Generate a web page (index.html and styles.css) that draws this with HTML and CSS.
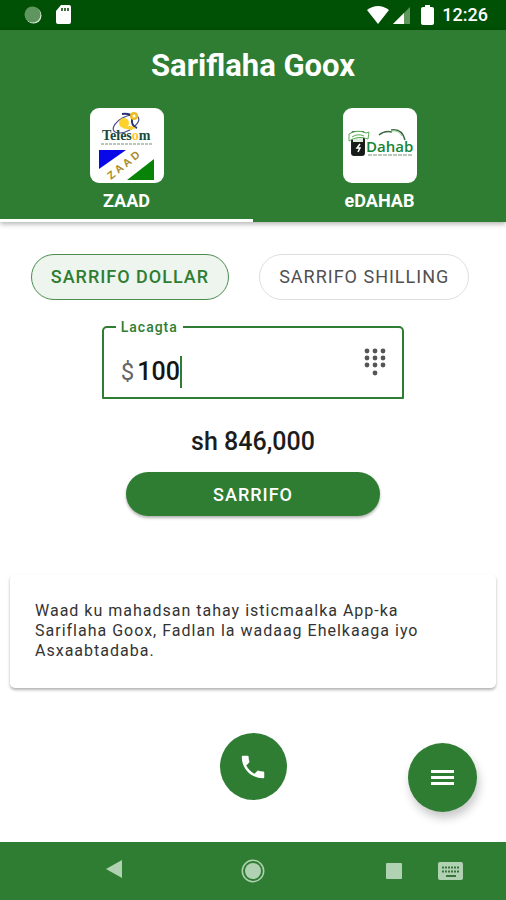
FILE: index.html
```html
<!DOCTYPE html>
<html lang="so">
<head>
<meta charset="utf-8">
<meta name="viewport" content="width=device-width, initial-scale=1">
<title>Sariflaha Goox</title>
<link rel="stylesheet" href="styles.css">
</head>
<body>
<div class="status-bar">
  <div class="status-group">
    <svg width="18" height="18" viewBox="0 0 18 18" aria-hidden="true"><circle cx="9.5" cy="9.5" r="8" fill="#d5e8d5"/><circle cx="8.5" cy="8.5" r="8" fill="#5f955f"/></svg>
    <svg width="16" height="20" viewBox="0 0 16 20" aria-hidden="true"><path d="M6 0h8a2 2 0 0 1 2 2v15a2 2 0 0 1-2 2H3a2 2 0 0 1-2-2V6z" fill="#fff"/><path d="M6 3h2v3H6zM9 3h2v3H9zM12 3h2v3h-2z" fill="#3d703d"/></svg>
  </div>
  <div class="status-group status-right">
    <svg width="22" height="18" viewBox="0 0 22 18" aria-hidden="true"><path d="M0 4Q11-4 22 4L11 18z" fill="#fff"/></svg>
    <svg width="18" height="18" viewBox="0 0 18 18" aria-hidden="true"><path d="M0 18L17 1v17z" fill="#5e965e"/><path d="M0 18L11 7v11z" fill="#fff"/></svg>
    <svg class="battery" width="13" height="20" viewBox="0 0 13 20" aria-hidden="true"><path d="M4 0h5v2h2a2 2 0 0 1 2 2v14a2 2 0 0 1-2 2H2a2 2 0 0 1-2-2V4a2 2 0 0 1 2-2h2z" fill="#fff"/></svg>
    <span class="clock">12:26</span>
  </div>
</div>
<header class="app-header">
  <h1 class="title">Sariflaha Goox</h1>
  <nav class="tabs">
    <button class="tab tab-active" type="button">
      <svg class="tab-logo" viewBox="0 0 74 75" aria-hidden="true">
        <g fill="none"><ellipse cx="36" cy="16" rx="14" ry="7" transform="rotate(-28 36 16)" stroke="#4b4b8e" stroke-width="1.200"/><path d="M32 6Q43 5 42 11Q41 18 47 20" stroke="#293176" stroke-width="2"/></g>
        <circle cx="34" cy="15" r="5" fill="#ffd12c"/><circle cx="44" cy="8" r="4" fill="#efbd22"/><circle cx="44" cy="8" r="1.500" fill="#fff"/><path d="M32 20q8-4 14 0l-5 2z" fill="#ffd12c"/>
        <text class="telesom" x="12" y="32" fill="#174b3d">Teles<tspan fill="#ffc928">o</tspan>m</text>
        <path d="M11 36h52" stroke="#b9c9b9" stroke-width="2" stroke-dasharray="3 1"/>
        <path d="M9 42h27L9 61z" fill="#0808e8"/><path d="M37 72l27-21v21z" fill="#078307"/>
        <text class="zaad" x="21" y="72" transform="rotate(-39 21 72)" fill="#aa8d28">Z A A D</text>
      </svg>
      <span>ZAAD</span>
    </button>
    <button class="tab" type="button">
      <svg class="tab-logo" viewBox="0 0 74 75" aria-hidden="true">
        <rect x="8" y="23" width="14" height="25" rx="3" fill="#1c2320"/><path d="M10 25h10v10H10z" fill="#dfeadf"/><rect x="9" y="34" width="12" height="13" rx="1" fill="#161b18"/><path d="M17 36l-3 4h3l-2 4" stroke="#fff" stroke-width="1.500" fill="none"/>
        <path d="M6 26q8-5 17-1l3-1-1 7q-10-4-19 2zM9 29q6-4 12-1" fill="#fff" stroke="#58ad57" stroke-width="1"/>
        <text class="dahab" x="23" y="44" fill="#168434">Dahab</text>
        <path d="M36 27Q42 22 49 24M48 22Q59 20 62 32" fill="none" stroke="#3c6943" stroke-width="1.500"/><path d="M48 23Q56 22 59 28" fill="none" stroke="#9cd595"/>
        <path d="M25 47h45" stroke="#789078" stroke-width="1" stroke-dasharray="4 1"/>
      </svg>
      <span>eDAHAB</span>
    </button>
  </nav>
</header>
<main class="content">
  <div class="chips">
    <button class="chip chip-active" type="button">SARRIFO DOLLAR</button>
    <button class="chip" type="button">SARRIFO SHILLING</button>
  </div>
  <form class="exchange">
    <fieldset class="field">
      <legend><label for="amount">Lacagta</label></legend>
      <div class="field-row">
        <span class="currency">$</span>
        <input class="amount" id="amount" type="text" inputmode="numeric" value="100">
        <span class="caret"></span>
        <svg class="keypad" width="22" height="28" viewBox="0 0 22 28" fill="#555" aria-hidden="true"><circle cx="3" cy="3" r="2.400"/><circle cx="11" cy="3" r="2.400"/><circle cx="19" cy="3" r="2.400"/><circle cx="3" cy="10" r="2.400"/><circle cx="11" cy="10" r="2.400"/><circle cx="19" cy="10" r="2.400"/><circle cx="3" cy="17" r="2.400"/><circle cx="11" cy="17" r="2.400"/><circle cx="19" cy="17" r="2.400"/><circle cx="11" cy="25" r="2.400"/></svg>
      </div>
    </fieldset>
    <output class="result" for="amount">sh 846,000</output>
    <button class="submit" type="button">SARRIFO</button>
  </form>
  <p class="card">Waad ku mahadsan tahay isticmaalka App-ka Sariflaha Goox, Fadlan la wadaag Ehelkaaga iyo Asxaabtadaba.</p>
  <div class="actions">
    <button class="round call" type="button" aria-label="Call"><svg width="30" height="30" viewBox="0 0 24 24" aria-hidden="true"><path fill="#fff" d="M6.6 10.8c1.4 2.8 3.8 5.1 6.6 6.6l2.2-2.2c.3-.3.7-.4 1-.2 1.1.4 2.3.6 3.6.6.6 0 1 .4 1 1V20c0 .6-.4 1-1 1C10.600 21 3 13.400 3 4c0-.6.4-1 1-1h3.500c.6 0 1 .4 1 1 0 1.300.2 2.500.6 3.600.1.3 0 .7-.3 1z"/></svg></button>
    <button class="round menu" type="button" aria-label="Menu"><svg width="23" height="15" viewBox="0 0 23 15" aria-hidden="true"><path fill="#fff" d="M0 0h23v3H0zM0 6h23v3H0zM0 12h23v3H0z"/></svg></button>
  </div>
</main>
<footer class="nav-bar">
  <div class="nav-start">
    <button class="nav-key" type="button" aria-label="Back"><svg width="16" height="18" viewBox="0 0 16 18" aria-hidden="true"><path d="M16 0v18L0 9z" fill="#b1d2b2"/></svg></button>
  </div>
  <button class="nav-key" type="button" aria-label="Home"><svg width="24" height="24" viewBox="0 0 24 24" aria-hidden="true"><circle cx="12" cy="12" r="10.700" fill="none" stroke="#b1d2b2" stroke-width="1.500"/><circle cx="12" cy="12" r="8" fill="#b1d2b2"/></svg></button>
  <div class="nav-end">
    <button class="nav-key" type="button" aria-label="Recent"><svg width="16" height="16" viewBox="0 0 16 16" aria-hidden="true"><rect width="16" height="16" rx="1" fill="#b1d2b2"/></svg></button>
    <button class="nav-key" type="button" aria-label="Keyboard"><svg width="25" height="18" viewBox="0 0 25 18" aria-hidden="true"><rect width="25" height="18" rx="2" fill="#b1d2b2"/><path d="M4 5.500h18M4 9.500h18" stroke="#39733b" stroke-width="2" stroke-dasharray="2 1"/><path d="M8 14h10" stroke="#39733b" stroke-width="2"/></svg></button>
  </div>
</footer>
</body>
</html>
```
FILE: styles.css
```css
* { box-sizing: border-box; }
body {
  margin: 0;
  min-height: 100vh;
  display: flex;
  flex-direction: column;
  background: #fff;
  color: #1c1c1c;
  font-family: Roboto, "Liberation Sans", sans-serif;
}
button { border: 0; margin: 0; padding: 0; background: none; font: inherit; color: inherit; }
svg { display: block; flex: none; }
.status-bar {
  display: flex;
  justify-content: space-between;
  align-items: center;
  height: 30px;
  padding: 0 18px 0 24px;
  background: #005005;
  color: #fff;
}
.status-group { display: flex; align-items: center; gap: 13px; }
.status-right { gap: 4px; }
.battery { margin: 0 4px 0 6px; }
.clock { font-size: 18px; font-weight: 500; line-height: 20px; }
.app-header { background: #2e7d32; color: #fff; box-shadow: 0 2px 5px rgba(0, 0, 0, .3); }
.title { margin: 0; padding-top: 18px; font-size: 31px; line-height: 36px; font-weight: 700; text-align: center; }
.tabs { display: grid; grid-template-columns: 1fr 1fr; }
.tab {
  display: flex;
  flex-direction: column;
  align-items: center;
  gap: 8px;
  padding: 24px 0 8px;
  border-bottom: 3px solid transparent;
  font-size: 18px;
  line-height: 20px;
  font-weight: 700;
}
.tab-active { border-bottom-color: #fff; }
.tab-logo { width: 74px; height: 75px; border-radius: 9px; background: #fff; }
.telesom { font: 700 14px "Liberation Serif", serif; }
.zaad { font: 700 11px "Liberation Sans", sans-serif; }
.dahab { font: 600 15px "Open Sans", sans-serif; }
.content { flex: 1; display: flex; flex-direction: column; padding: 32px 9px 30px; }
.chips { display: flex; justify-content: center; gap: 30px; padding-right: 6px; }
.chip {
  height: 46px;
  padding: 0 19px;
  border: 1px solid #dedede;
  border-radius: 23px;
  color: #505050;
  font-size: 18px;
  line-height: 20px;
  letter-spacing: 1px;
  white-space: nowrap;
}
.chip-active { border-color: #4b8d4e; background: #eef4ee; color: #2e7d32; font-weight: 500; }
.exchange { display: flex; flex-direction: column; align-items: center; padding-top: 18px; }
.field { width: 62%; margin: 0; padding: 0 16px 4px 12px; border: 2px solid #2e7d32; border-radius: 5px 5px 1px 1px; }
.field legend { padding: 0 5px; color: #2e7d32; font-size: 14px; line-height: 18px; font-weight: 500; letter-spacing: 1px; }
.field-row { display: flex; align-items: center; height: 57px; padding: 14px 0 0 5px; }
.currency { padding-right: 3px; color: #666; font-size: 24px; line-height: 32px; }
.amount {
  width: 3ch;
  height: 32px;
  padding: 0;
  border: 0;
  outline: 0;
  background: none;
  color: #151515;
  caret-color: transparent;
  font: 500 25px Roboto, "Liberation Sans", sans-serif;
}
.caret { width: 2px; height: 32px; background: #2e7d32; }
.keypad { margin: 0 0 20px auto; }
.result { padding-top: 28px; font-size: 25px; line-height: 30px; font-weight: 500; }
.submit {
  width: 52%;
  height: 44px;
  margin-top: 15px;
  border-radius: 22px;
  background: #2e7d32;
  color: #fff;
  font-size: 18px;
  font-weight: 500;
  letter-spacing: 1px;
  box-shadow: 0 2px 3px rgba(0, 0, 0, .3);
}
.card {
  margin: 58px 1px 0;
  padding: 27px 64px 27px 25px;
  border-radius: 5px;
  color: #333;
  font-size: 16px;
  line-height: 20px;
  letter-spacing: 1px;
  box-shadow: 0 2px 3px rgba(0, 0, 0, .3);
}
.actions { display: grid; grid-template-columns: 1fr auto 1fr; align-items: start; margin-top: auto; padding: 0 20px; }
.round { display: flex; align-items: center; justify-content: center; border-radius: 50%; background: #2e7d32; }
.call { grid-column: 2; width: 67px; height: 67px; }
.menu { justify-self: end; width: 69px; height: 69px; margin-top: 10px; box-shadow: 2px 6px 10px rgba(0, 0, 0, .22); }
.nav-bar {
  display: grid;
  grid-template-columns: 1fr auto 1fr;
  align-items: center;
  height: 58px;
  background: #2e7d32;
}
.nav-start { padding-left: 106px; }
.nav-end { display: flex; align-items: center; justify-content: flex-end; gap: 36px; padding-right: 43px; }
```
